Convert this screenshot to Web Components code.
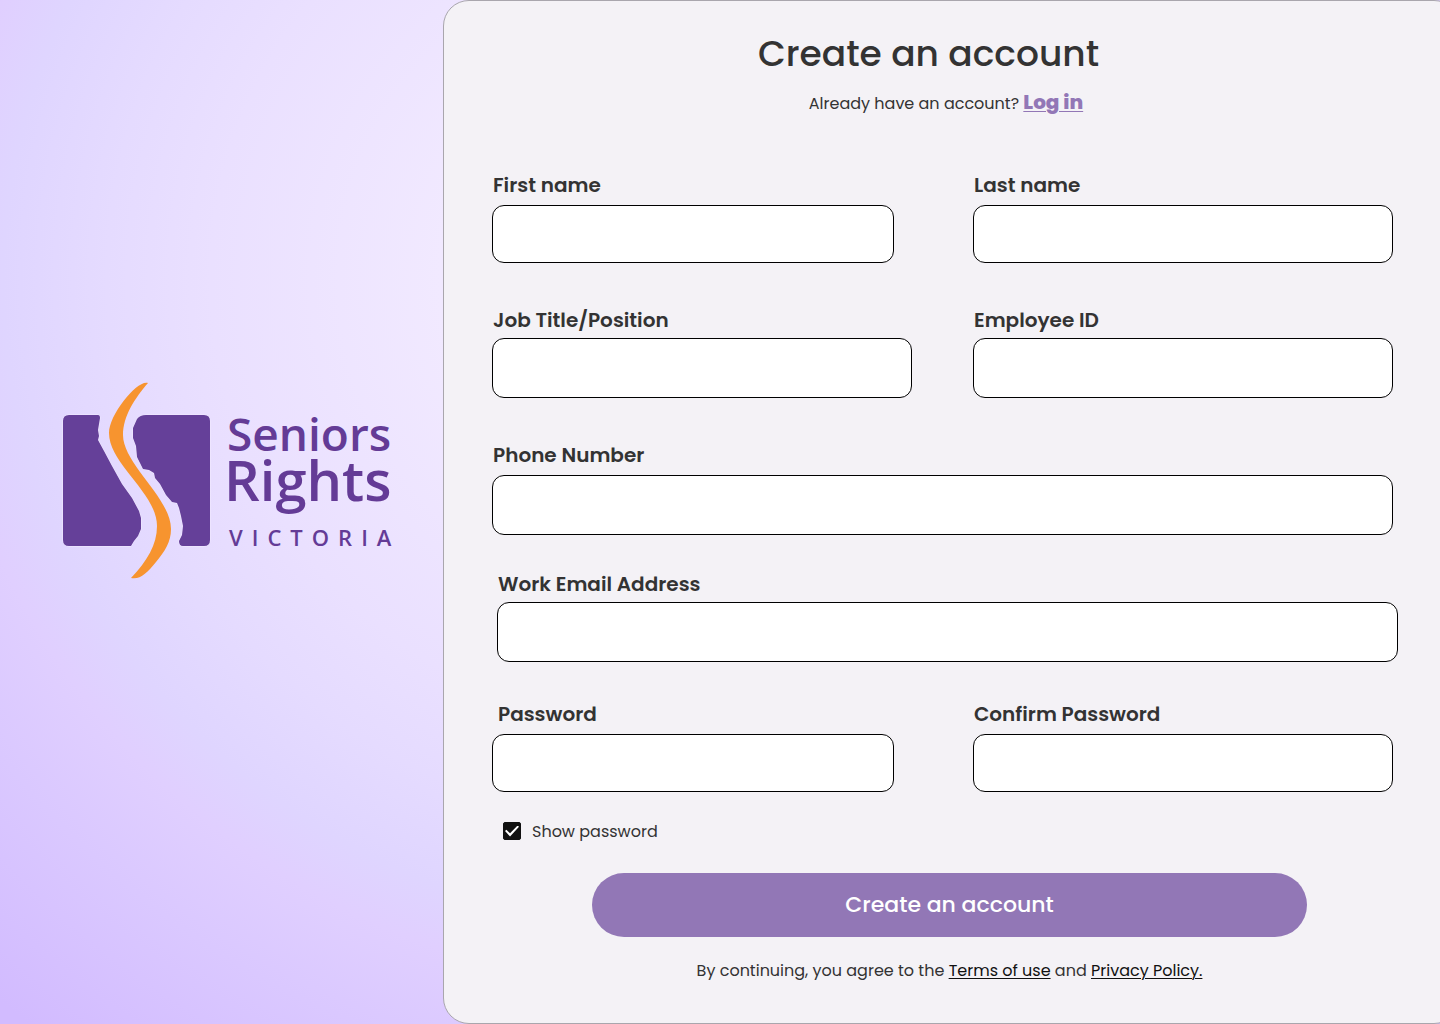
<!DOCTYPE html>
<html lang="en">
<head>
<meta charset="utf-8">
<meta name="viewport" content="width=device-width, initial-scale=1">
<title>Create an account – Seniors Rights Victoria</title>
<style>
  html, body { margin: 0; min-height: 100%; }
  body { font-family: Poppins, Inter, sans-serif; color: #333; font-size: 16px; }
</style>
</head>
<body>
<signup-page>
  <brand-logo slot="brand"></brand-logo>
  <signup-form></signup-form>
</signup-page>

<template id="signup-page">
  <style>
    :host {
      display: grid;
      grid-template-columns: minmax(0, 443fr) minmax(0, 997fr);
      min-height: 100vh;
      overflow: hidden;
      background: radial-gradient(1040px 975px at 700px 280px, #f4edff 0%, #f1e9ff 25%, #eae0ff 47%, #e5dbff 57%, #dfd5ff 67%, #e0cfff 73%, #dac8ff 83%, #d2bbff 100%);
    }
    aside { display: grid; place-items: center; padding: 0 37px 62px 61px; }
    main {
      box-sizing: border-box;
      margin-right: -20px;
      padding: 26px 66px 30px 48px;
      background: #f4f2f6;
      border: 1px solid #a9a6ad;
      border-radius: 26px;
    }
  </style>
  <aside><slot name="brand"></slot></aside>
  <main><slot></slot></main>
</template>

<template id="brand-logo">
  <style>
    :host { display: block; width: 100%; max-width: 345px; }
    svg { display: block; width: 100%; height: auto; }
    text { font-family: "Open Sans", sans-serif; fill: #643b96; }
  </style>
  <svg viewBox="61 382 345 198" role="img" aria-label="Seniors Rights Victoria">
    <g fill="#654099" stroke="#f3ebff" stroke-width="1" paint-order="stroke">
      <path d="M69 415H98Q100 415 100 418L99 424L98 430L99 436L98 440L104 451L112 466L122 484L132 498L139 511L141 518V529L138 536L134 541L131 546H69Q63 546 63 540V421Q63 415 69 415Z"/>
      <path d="M146 415H204Q210 415 210 421V540Q210 546 204 546H183Q179 546 179 541L182 535L183 526L181 516L179 508L177 503L172 502L166 495L160 484L155 478L154 473L149 470L143 469L140 463L137 457L136 446L133 438L133 428L137 419Q140 415 146 415Z"/>
    </g>
    <path fill="#f7942f" d="M148 383C138 379 109 414 109 433C109 464 157 493 157 526C157 545 147 561 131 578C140 580 147 573 156 562C165 551 171 542 171 529C171 498 123 464 123 435C123 416 135 398 148 383Z"/>
    <text font-size="46" font-weight="600"><tspan x="227" y="451">Seniors</tspan><tspan x="224" y="501" font-size="56">Rights</tspan></text>
    <text x="229" y="546" font-size="22" font-weight="600" letter-spacing="9">VICTORIA</text>
  </svg>
</template>

<template id="signup-form">
  <style>
    :host { display: block; }
    header { text-align: center; }
    h1 { margin: 0; padding-right: 28px; font-size: 36px; line-height: 54px; font-weight: 500; }
    header p { margin: 6px 0 0; padding-left: 7px; line-height: 30px; }
    a { color: #111; text-underline-offset: 2px; text-decoration-thickness: 1px; }
    header a { color: #9277b6; font-size: 20px; font-weight: 800; }
    form { margin: 0; padding-top: 51px; }
    .row { display: grid; grid-template-columns: 1fr 1fr; column-gap: 61px; margin-bottom: 42px; }
    .row.wide { grid-template-columns: 1fr; margin-bottom: 34px; }
    .row.shift { margin-left: 5px; margin-right: -5px; margin-bottom: 37px; }
    .row.last { margin-bottom: 29px; }
    .short { margin-right: 18px; }
    .check { display: flex; align-items: center; gap: 11px; margin-left: 11px; height: 20px; }
    .check input {
      appearance: none; margin: 0; width: 18px; height: 18px; border-radius: 2px; border: 1px solid #111;
      display: grid; place-items: center;
    }
    .check input:checked { background: #111; }
    .check input:checked::before {
      content: ""; width: 14px; height: 11px; background: #fff;
      clip-path: polygon(0 50%, 10% 38%, 36% 70%, 90% 0, 100% 12%, 36% 100%);
    }
    .actions { margin: 32px 86px 0 100px; text-align: center; }
    button {
      display: block; width: 100%; height: 64px; padding: 0 0 2px; border: 0; border-radius: 32px;
      background: #9277b6; color: #fff; font: inherit; font-size: 22px; font-weight: 500; cursor: pointer;
    }
    .actions p { margin: 19px 0 0; line-height: 30px; white-space: nowrap; }
  </style>
  <header>
    <h1>Create an account</h1>
    <p>Already have an account? <a href="#login">Log in</a></p>
  </header>
  <form>
    <div class="row">
      <form-field class="short" label="First name" name="first" roomy compact></form-field>
      <form-field label="Last name" name="last" roomy compact></form-field>
    </div>
    <div class="row">
      <form-field label="Job Title/Position" name="job"></form-field>
      <form-field label="Employee ID" name="employee"></form-field>
    </div>
    <div class="row wide">
      <form-field label="Phone Number" name="phone" type="tel" roomy></form-field>
    </div>
    <div class="row wide shift">
      <form-field label="Work Email Address" name="email" type="email"></form-field>
    </div>
    <div class="row last">
      <form-field class="short" label="Password" name="password" roomy compact indent></form-field>
      <form-field label="Confirm Password" name="confirm" roomy compact></form-field>
    </div>
    <div class="check">
      <input type="checkbox" id="show" checked>
      <label for="show">Show password</label>
    </div>
    <div class="actions">
      <button type="submit">Create an account</button>
      <p>By continuing, you agree to the <a href="#terms">Terms of use</a> and <a href="#privacy">Privacy Policy.</a></p>
    </div>
  </form>
</template>

<template id="form-field">
  <style>
    :host { display: flex; flex-direction: column; gap: 3px; min-width: 0; }
    :host([roomy]) { gap: 5px; }
    label { padding-left: 1px; font-size: 20px; line-height: 30px; font-weight: 600; }
    :host([indent]) label { padding-left: 6px; }
    input {
      box-sizing: border-box; width: 100%; height: 60px; margin: 0; padding: 0 16px;
      border: 1px solid #000; border-radius: 12px; background: #fff; color: inherit; font: inherit;
    }
    :host([compact]) input { height: 58px; }
  </style>
  <label for="box"></label>
  <input id="box">
</template>

<script>
  class TemplateElement extends HTMLElement {
    constructor() {
      super();
      const template = document.getElementById(this.localName);
      this.attachShadow({ mode: "open" }).append(template.content.cloneNode(true));
    }
  }
  class FormField extends TemplateElement {
    connectedCallback() {
      this.shadowRoot.querySelector("label").textContent = this.getAttribute("label");
      const input = this.shadowRoot.querySelector("input");
      input.name = this.getAttribute("name");
      input.type = this.getAttribute("type") || "text";
    }
  }
  customElements.define("form-field", FormField);
  customElements.define("brand-logo", class extends TemplateElement {});
  customElements.define("signup-form", class extends TemplateElement {});
  customElements.define("signup-page", class extends TemplateElement {});
</script>
</body>
</html>
